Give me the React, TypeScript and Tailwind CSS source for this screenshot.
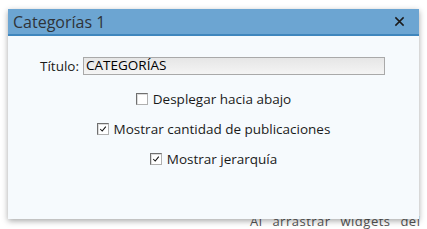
import React from 'react';

function Check({ checked }: { checked?: boolean }) {
  return (
    <span className="relative inline-block w-[12px] h-[12px] bg-white border border-[#b0b0b0] border-t-[#6f6f6f] border-l-[#6f6f6f] shadow-[inset_1px_1px_0_#dcdcdc]">
      {checked && (
        <svg viewBox="0 0 10 10" className="absolute left-[1px] top-[1px] w-[8px] h-[8px]">
          <path d="M1.5 5 L4 7.5 L8.5 2" fill="none" stroke="#111" strokeWidth="1.3" />
        </svg>
      )}
    </span>
  );
}

function Option({ label, checked }: { label: string; checked?: boolean }) {
  return (
    <label className="flex items-center justify-center gap-[5px] h-[30px]">
      <Check checked={checked} />
      <span>{label}</span>
    </label>
  );
}

export default function App() {
  return (
    <div className="relative w-[427px] h-[229px] bg-white overflow-hidden font-['Open_Sans',sans-serif] text-[13.5px] text-[#1a1a1a]">
      {/* page behind the dialog */}
      <div className="absolute left-[250px] top-[213px] text-[13px] leading-[16px] text-[#555] tracking-[0.5px] [word-spacing:6px] whitespace-nowrap">
        Al arrastrar widgets del
      </div>
      <div className="absolute left-[8px] top-[40px] w-[2px] h-[150px] border-l border-dashed border-[#888]" />

      <div className="absolute left-[8px] top-[9px] w-[411px] h-[210px] bg-[#f6fafd] shadow-[0_2px_6px_rgba(0,0,0,0.35)] flex flex-col">
        <div className="h-[27px] bg-[#6ca5d2] border-b-[2px] border-[#3f86bd] flex items-center justify-between pl-[5px] pr-[14px]">
          <span className="text-[16px] text-[#2f3338] leading-none">Categorías 1</span>
          <svg viewBox="0 0 12 12" className="w-[11px] h-[11px]">
            <path d="M1.5 1.5 L10.5 10.5 M10.5 1.5 L1.5 10.5" stroke="#1b1b1b" strokeWidth="1.6" />
          </svg>
        </div>
        <div className="flex flex-col pt-[20px]">
          <div className="flex items-center pl-[32px] gap-[4px]">
            <span>Título:</span>
            <div className="w-[302px] h-[18px] border border-[#a9a9a9] bg-gradient-to-b from-[#e6e6e6] to-[#f4f4f4] flex items-center pl-[2px] text-black leading-none">
              CATEGORÍAS
            </div>
          </div>
          <div className="flex flex-col mt-[8px]">
            <Option label="Desplegar hacia abajo" />
            <Option label="Mostrar cantidad de publicaciones" checked />
            <Option label="Mostrar jerarquía" checked />
          </div>
        </div>
      </div>
    </div>
  );
}
